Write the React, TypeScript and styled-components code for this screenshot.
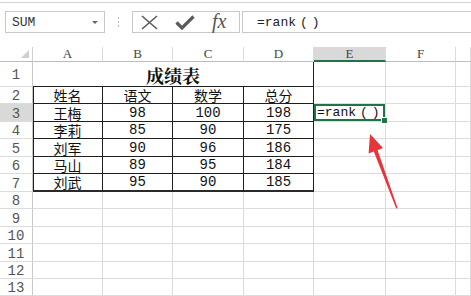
import styled, { createGlobalStyle } from 'styled-components';

const GlobalStyle = createGlobalStyle`
  html, body {
    margin: 0;
    padding: 0;
    background: #ffffff;
  }
  body {
    width: 471px;
    height: 296px;
    overflow: hidden;
    font-family: "Noto Sans CJK SC", "Liberation Sans", sans-serif;
  }
`;

const COLS = ['A', 'B', 'C', 'D', 'E', 'F', ''];
const ROW_HEIGHTS = [25, 17, 18, 17, 18, 17, 18, 17, 18, 17, 18, 17, 17];

const TABLE = [
  ['姓名', '语文', '数学', '总分'],
  ['王梅', '98', '100', '198'],
  ['李莉', '85', '90', '175'],
  ['刘军', '90', '96', '186'],
  ['马山', '89', '95', '184'],
  ['刘武', '95', '90', '185'],
];

const ACTIVE_COL = 4;
const ACTIVE_ROW = 3;

const Page = styled.div`
  position: relative;
  width: 471px;
  height: 296px;
  overflow: hidden;
  background: #fff;
`;

const TopStrip = styled.div`
  height: 2px;
  border-bottom: 1px solid #d4d4d4;
`;

const Toolbar = styled.div`
  display: flex;
  align-items: center;
  height: 44px;
  padding: 0 0 6px 5px;
  box-sizing: border-box;
`;

const NameBox = styled.div`
  display: flex;
  align-items: center;
  justify-content: space-between;
  width: 100px;
  height: 22px;
  box-sizing: border-box;
  border: 1px solid #c8c8c8;
  padding: 0 6px 0 6px;
  font-family: "Liberation Mono", monospace;
  font-size: 13px;
  color: #333;
`;

const DropArrow = styled.span`
  width: 0;
  height: 0;
  border-left: 3px solid transparent;
  border-right: 3px solid transparent;
  border-top: 3px solid #666;
`;

const Grip = styled.div`
  display: flex;
  flex-direction: column;
  gap: 2px;
  margin: 0 13px 0 13px;

  span {
    width: 1px;
    height: 2px;
    background: #b8b8b8;
  }
`;

const ButtonBox = styled.div`
  display: flex;
  align-items: center;
  gap: 17px;
  width: 108px;
  height: 22px;
  box-sizing: border-box;
  border: 1px solid #c8c8c8;
  padding-left: 8px;
`;

const Fx = styled.span`
  font-family: "Liberation Serif", serif;
  font-style: italic;
  font-size: 20px;
  line-height: 20px;
  color: #555;
  margin-top: -2px;
`;

const FormulaInput = styled.div`
  flex: 1;
  display: flex;
  align-items: center;
  height: 22px;
  margin-left: 2px;
  margin-right: -2px;
  box-sizing: border-box;
  border: 1px solid #c8c8c8;
  padding-left: 14px;
  font-family: "Liberation Mono", monospace;
  font-size: 13px;
  color: #222;
`;

const Paren = styled.span`
  font-family: "Liberation Mono", monospace;
  margin-left: 4px;
  letter-spacing: 4px;
`;

const Sheet = styled.div`
  display: grid;
  grid-template-columns: 33px 70px 70px 71px 70px 72px 70px 1fr;
  grid-template-rows: 15px ${ROW_HEIGHTS.map(h => `${h}px`).join(' ')};
`;

const Corner = styled.div`
  position: relative;
  border-right: 1px solid #d0d0d0;
  border-bottom: 1px solid #bdbdbd;

  &::after {
    content: '';
    position: absolute;
    right: 3px;
    bottom: 3px;
    border-left: 8px solid transparent;
    border-bottom: 8px solid #cfcfcf;
  }
`;

const ColHead = styled.div<{ $active?: boolean }>`
  display: flex;
  align-items: center;
  justify-content: center;
  box-sizing: border-box;
  border-right: 1px solid #dcdcdc;
  border-bottom: ${p => (p.$active ? '2px solid #217346' : '1px solid #bdbdbd')};
  background: ${p => (p.$active ? '#d9d9d9' : '#fff')};
  font-family: "Liberation Serif", serif;
  font-size: 13px;
  color: #444;
`;

const RowHead = styled.div<{ $active?: boolean }>`
  display: flex;
  align-items: center;
  justify-content: center;
  box-sizing: border-box;
  border-right: 1px solid #c8c8c8;
  border-bottom: 1px solid #dcdcdc;
  background: ${p => (p.$active ? '#d9d9d9' : '#fff')};
  font-family: "Liberation Mono", monospace;
  font-size: 14px;
  color: #555;
  padding-top: 2px;
`;

const Cell = styled.div<{
  $table?: boolean;
  $first?: boolean;
  $last?: boolean;
  $span?: number;
  $selected?: boolean;
}>`
  position: relative;
  display: flex;
  align-items: center;
  justify-content: center;
  box-sizing: border-box;
  grid-column: ${p => (p.$span ? `span ${p.$span}` : 'auto')};
  border-right: 1px solid ${p => (p.$table ? '#1e1e1e' : '#dcdcdc')};
  border-bottom: ${p => (p.$last ? '2px solid #2a2a2a' : `1px solid ${p.$table ? '#1e1e1e' : '#dcdcdc'}`)};
  box-shadow: ${p =>
    p.$selected ? 'inset 0 0 0 2px #217346' : p.$first ? 'inset 1px 0 #1e1e1e' : 'none'};
  font-family: "Liberation Mono", "Noto Sans CJK SC", monospace;
  font-size: 14px;
  color: #111;
  white-space: nowrap;
  overflow: visible;
`;

const Title = styled(Cell)`
  font-family: "Noto Serif CJK SC", "Noto Sans CJK SC", serif;
  font-size: 18px;
  font-weight: 700;
  padding-top: 2px;
`;

const Formula = styled.span`
  position: absolute;
  left: 3px;
  top: 0;
  bottom: 0;
  display: flex;
  align-items: center;
  font-size: 13px;
  color: #111;
`;

const FillHandle = styled.span`
  position: absolute;
  right: -3px;
  bottom: -3px;
  width: 5px;
  height: 5px;
  background: #217346;
  border: 1px solid #fff;
  z-index: 2;
`;

const ArrowLayer = styled.svg`
  position: absolute;
  left: 0;
  top: 0;
  pointer-events: none;
`;

function RankText() {
  return (
    <>
      =rank<Paren>()</Paren>
    </>
  );
}

function Toolbars() {
  return (
    <>
      <TopStrip />
      <Toolbar>
        <NameBox>
          SUM
          <DropArrow />
        </NameBox>
        <Grip>
          <span />
          <span />
          <span />
        </Grip>
        <ButtonBox>
          <svg width="17" height="15" viewBox="0 0 17 15">
            <path d="M1 1 L16 14 M16 1 L1 14" stroke="#5a5a5a" strokeWidth="1.6" fill="none" />
          </svg>
          <svg width="20" height="15" viewBox="0 0 20 15">
            <path d="M1.5 7.5 L7 13 L18.5 1.5" stroke="#5a5a5a" strokeWidth="3.2" fill="none" />
          </svg>
          <Fx>fx</Fx>
        </ButtonBox>
        <FormulaInput>
          <RankText />
        </FormulaInput>
      </Toolbar>
    </>
  );
}

function DataRow({ row }: { row: number }) {
  const values = row >= 2 && row <= 7 ? TABLE[row - 2] : null;
  const cells = [];

  if (row === 1) {
    cells.push(
      <Title key="title" $span={4} $table>
        成绩表
      </Title>
    );
  } else {
    for (let c = 0; c < 4; c++) {
      cells.push(
        <Cell key={c} $table={!!values} $first={!!values && c === 0} $last={row === 7}>
          {values ? values[c] : ''}
        </Cell>
      );
    }
  }

  for (let c = 4; c < 7; c++) {
    const selected = row === ACTIVE_ROW && c === ACTIVE_COL;
    cells.push(
      <Cell key={c} $selected={selected}>
        {selected && (
          <>
            <Formula>
              <RankText />
            </Formula>
            <FillHandle />
          </>
        )}
      </Cell>
    );
  }

  return (
    <>
      <RowHead $active={row === ACTIVE_ROW}>{row}</RowHead>
      {cells}
    </>
  );
}

export default function App() {
  return (
    <Page>
      <GlobalStyle />
      <Toolbars />
      <Sheet>
        <Corner />
        {COLS.map((c, i) => (
          <ColHead key={i} $active={i === ACTIVE_COL}>
            {c}
          </ColHead>
        ))}
        {ROW_HEIGHTS.map((_, i) => (
          <DataRow key={i} row={i + 1} />
        ))}
      </Sheet>
      <ArrowLayer width="471" height="296" viewBox="0 0 471 296">
        <polygon
          points="370,134 383,148 377.6,150.2 397.6,208 396.2,208.4 373.8,151.6 368.6,153.6"
          fill="#e8353b"
        />
      </ArrowLayer>
    </Page>
  );
}
